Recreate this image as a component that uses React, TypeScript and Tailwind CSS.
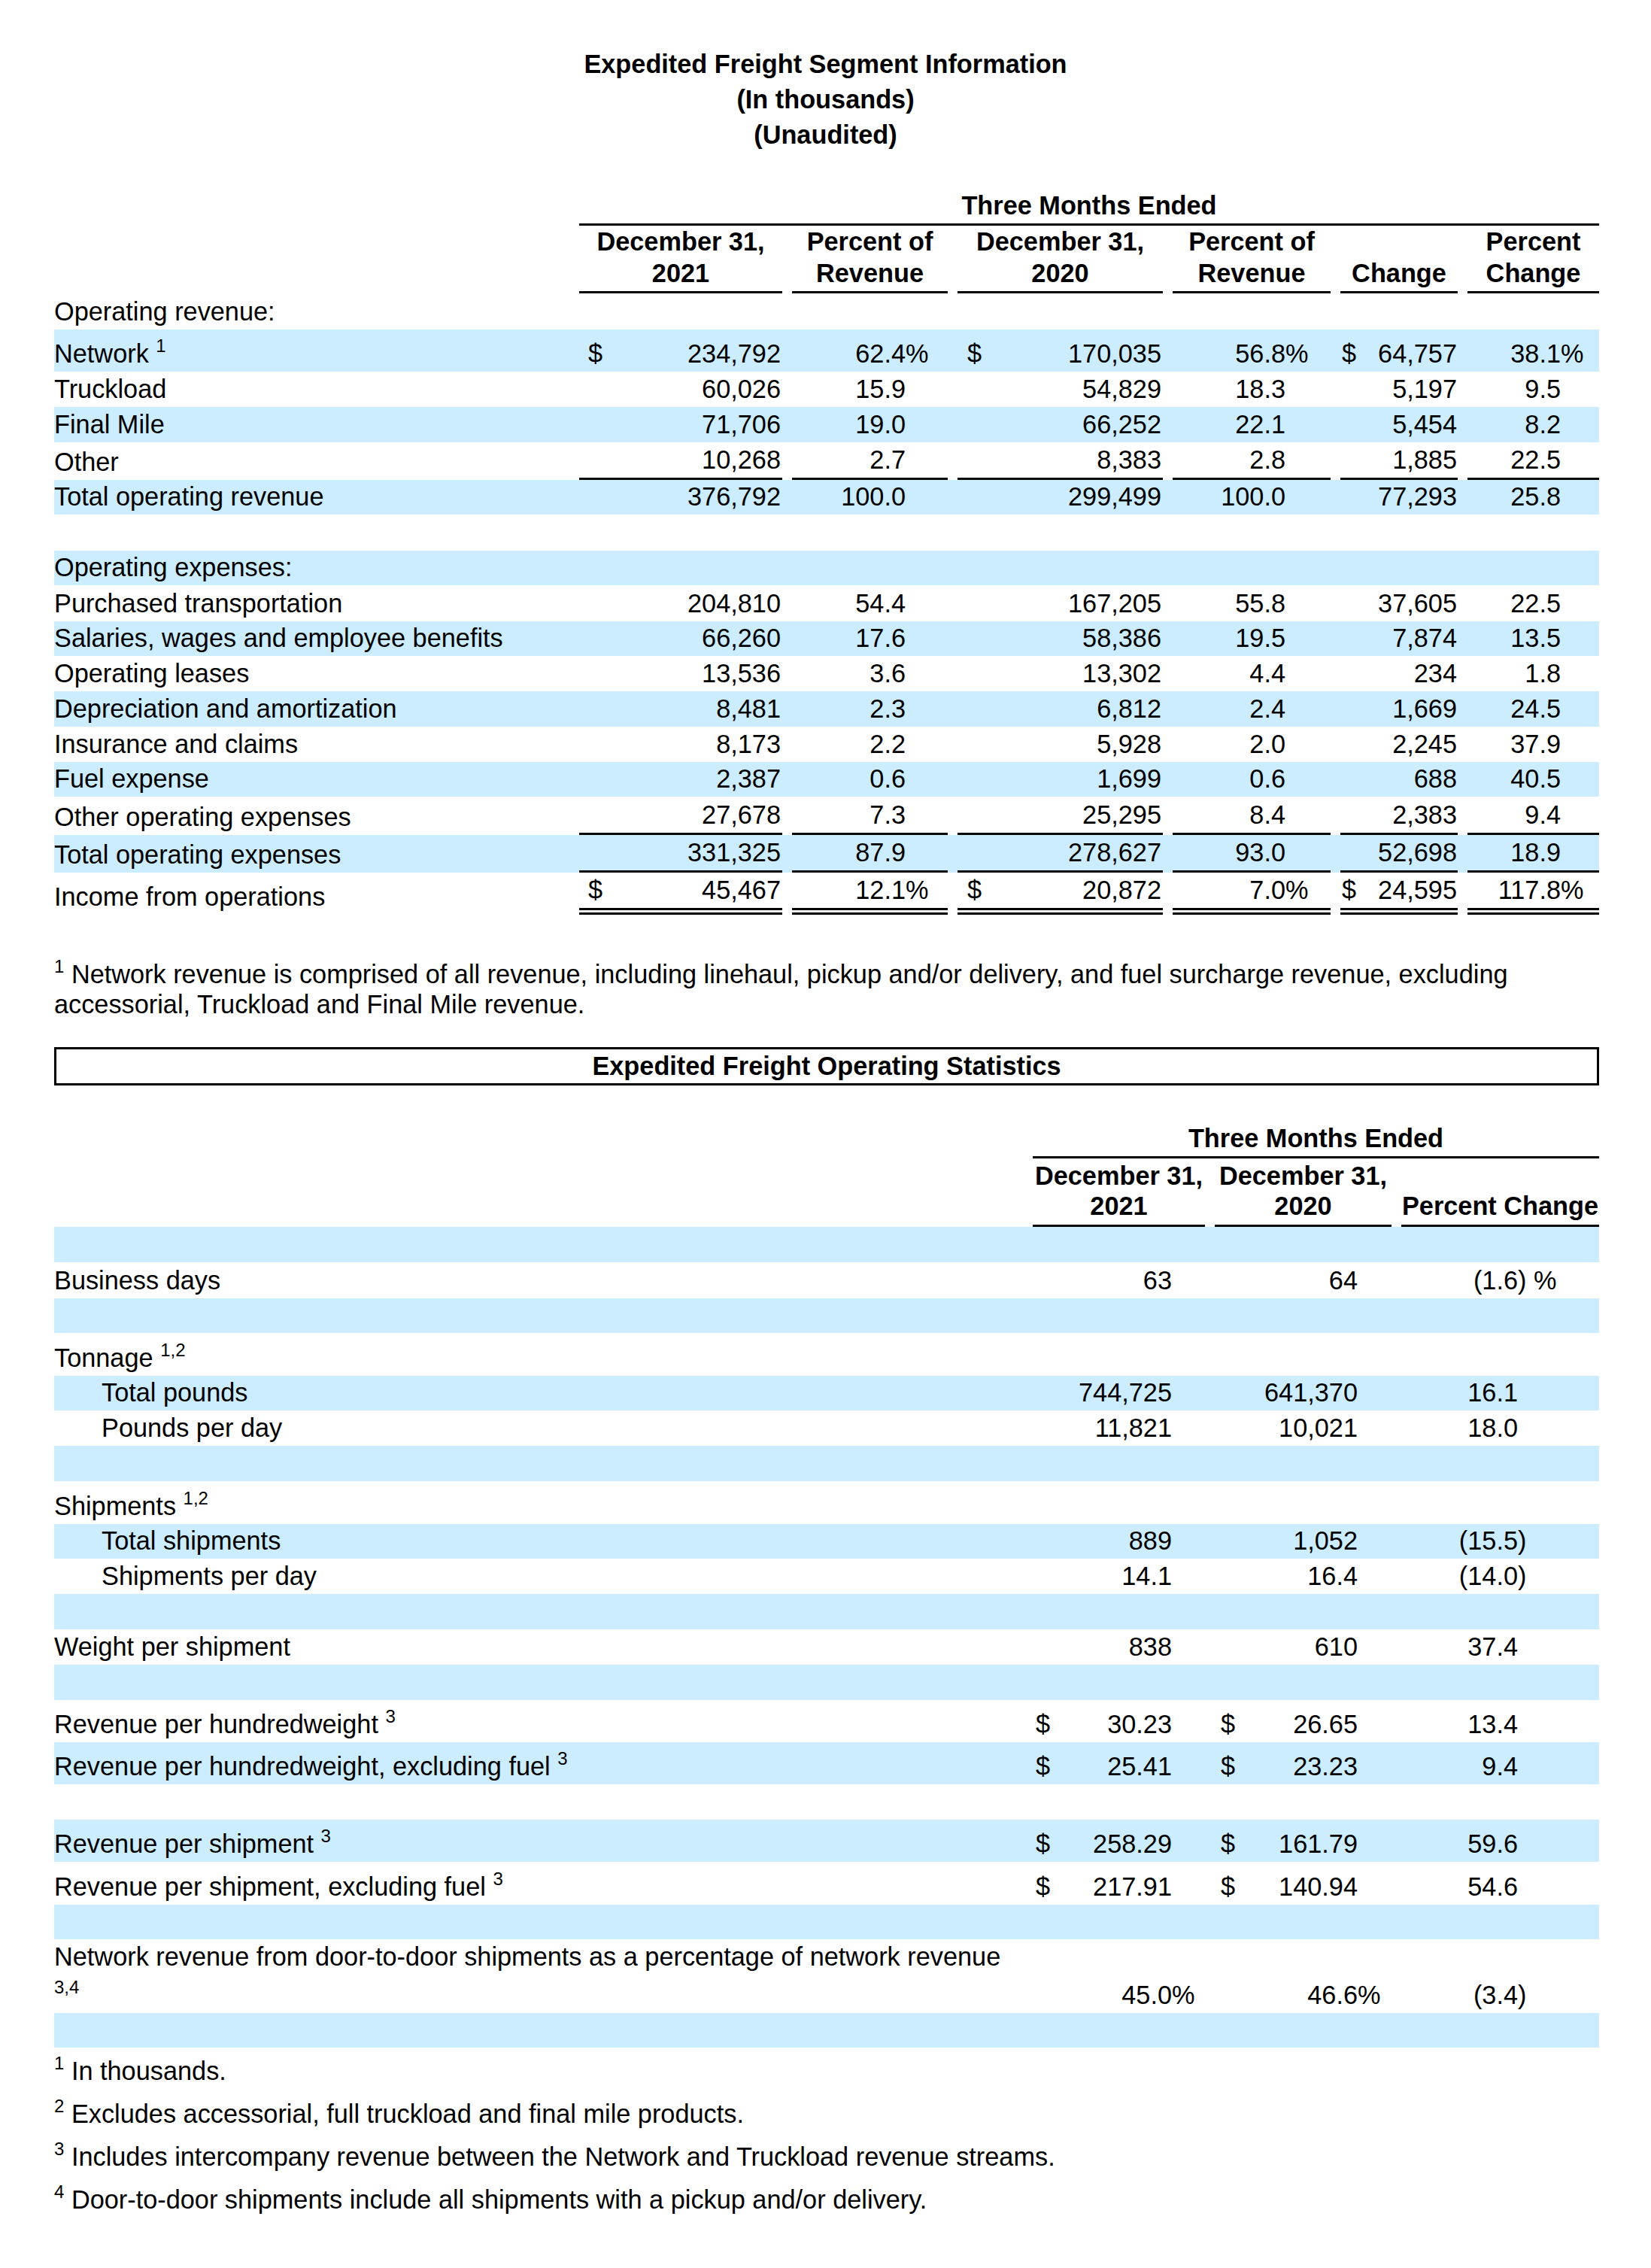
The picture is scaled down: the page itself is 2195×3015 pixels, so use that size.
import React from "react";

const BLUE = "bg-[#ccecff]";

function Sup({ children }: { children: React.ReactNode }) {
  return <span className="relative top-[-14px] text-[24px] leading-none">{children}</span>;
}

type V = { d?: boolean; v: string; s?: string };

const T1W = ["w-[270px]", "w-[207px]", "w-[273px]", "w-[210px]", "w-[156px]", "w-[175px]"];
const T1PR = ["pr-[2px]", "pr-[56px]", "pr-[2px]", "pr-[60px]", "pr-[1px]", "pr-[51px]"];
const T1PL = ["pl-[12px]", "", "pl-[13px]", "", "pl-[2px]", ""];

const T2W = ["w-[229px]", "w-[235px]", "w-[263px]"];
const T2PR = ["pr-[44px]", "pr-[45px]", "pr-[108px]"];
const T2PL = ["pl-[4px]", "pl-[8px]", ""];

function Cell({ val, w, pr, pl, border }: { val?: V; w: string; pr: string; pl: string; border: string }) {
  return (
    <div className={`flex shrink-0 leading-[47px] ${w} ${pr} ${pl} ${border}`}>
      {val?.d && <span>$</span>}
      <span className="ml-auto whitespace-nowrap">{val ? val.v : "\u00a0"}</span>
      {val?.s && <span className="w-0 shrink-0 whitespace-nowrap">{val.s}</span>}
    </div>
  );
}

type R1 = {
  label?: React.ReactNode;
  vals?: V[];
  h: string;
  blue?: boolean;
  border?: "single" | "double";
};

const rows1: R1[] = [
  { label: "Operating revenue:", h: "h-[48px]" },
  {
    label: (
      <>
        Network <Sup>1</Sup>
      </>
    ),
    h: "h-[56px]",
    blue: true,
    vals: [
      { d: true, v: "234,792" },
      { v: "62.4", s: "%" },
      { d: true, v: "170,035" },
      { v: "56.8", s: "%" },
      { d: true, v: "64,757" },
      { v: "38.1", s: "%" },
    ],
  },
  {
    label: "Truckload",
    h: "h-[47px]",
    vals: [{ v: "60,026" }, { v: "15.9" }, { v: "54,829" }, { v: "18.3" }, { v: "5,197" }, { v: "9.5" }],
  },
  {
    label: "Final Mile",
    h: "h-[47px]",
    blue: true,
    vals: [{ v: "71,706" }, { v: "19.0" }, { v: "66,252" }, { v: "22.1" }, { v: "5,454" }, { v: "8.2" }],
  },
  {
    label: "Other",
    h: "h-[50px]",
    border: "single",
    vals: [{ v: "10,268" }, { v: "2.7" }, { v: "8,383" }, { v: "2.8" }, { v: "1,885" }, { v: "22.5" }],
  },
  {
    label: "Total operating revenue",
    h: "h-[46px]",
    blue: true,
    vals: [{ v: "376,792" }, { v: "100.0" }, { v: "299,499" }, { v: "100.0" }, { v: "77,293" }, { v: "25.8" }],
  },
  { h: "h-[48px]" },
  { label: "Operating expenses:", h: "h-[46px]", blue: true },
  {
    label: "Purchased transportation",
    h: "h-[48px]",
    vals: [{ v: "204,810" }, { v: "54.4" }, { v: "167,205" }, { v: "55.8" }, { v: "37,605" }, { v: "22.5" }],
  },
  {
    label: "Salaries, wages and employee benefits",
    h: "h-[46px]",
    blue: true,
    vals: [{ v: "66,260" }, { v: "17.6" }, { v: "58,386" }, { v: "19.5" }, { v: "7,874" }, { v: "13.5" }],
  },
  {
    label: "Operating leases",
    h: "h-[47px]",
    vals: [{ v: "13,536" }, { v: "3.6" }, { v: "13,302" }, { v: "4.4" }, { v: "234" }, { v: "1.8" }],
  },
  {
    label: "Depreciation and amortization",
    h: "h-[47px]",
    blue: true,
    vals: [{ v: "8,481" }, { v: "2.3" }, { v: "6,812" }, { v: "2.4" }, { v: "1,669" }, { v: "24.5" }],
  },
  {
    label: "Insurance and claims",
    h: "h-[47px]",
    vals: [{ v: "8,173" }, { v: "2.2" }, { v: "5,928" }, { v: "2.0" }, { v: "2,245" }, { v: "37.9" }],
  },
  {
    label: "Fuel expense",
    h: "h-[46px]",
    blue: true,
    vals: [{ v: "2,387" }, { v: "0.6" }, { v: "1,699" }, { v: "0.6" }, { v: "688" }, { v: "40.5" }],
  },
  {
    label: "Other operating expenses",
    h: "h-[51px]",
    border: "single",
    vals: [{ v: "27,678" }, { v: "7.3" }, { v: "25,295" }, { v: "8.4" }, { v: "2,383" }, { v: "9.4" }],
  },
  {
    label: "Total operating expenses",
    h: "h-[50px]",
    blue: true,
    border: "single",
    vals: [{ v: "331,325" }, { v: "87.9" }, { v: "278,627" }, { v: "93.0" }, { v: "52,698" }, { v: "18.9" }],
  },
  {
    label: "Income from operations",
    h: "h-[56px]",
    border: "double",
    vals: [
      { d: true, v: "45,467" },
      { v: "12.1", s: "%" },
      { d: true, v: "20,872" },
      { v: "7.0", s: "%" },
      { d: true, v: "24,595" },
      { v: "117.8", s: "%" },
    ],
  },
];

type R2 = {
  label?: React.ReactNode;
  vals?: V[];
  h: string;
  blue?: boolean;
  indent?: boolean;
  tall?: boolean;
};

const rows2: R2[] = [
  { h: "h-[47px]", blue: true },
  { label: "Business days", h: "h-[48px]", vals: [{ v: "63" }, { v: "64" }, { v: "(1.6", s: ") %" }] },
  { h: "h-[46px]", blue: true },
  {
    label: (
      <>
        Tonnage <Sup>1,2</Sup>
      </>
    ),
    h: "h-[57px]",
  },
  { label: "Total pounds", indent: true, h: "h-[46px]", blue: true, vals: [{ v: "744,725" }, { v: "641,370" }, { v: "16.1" }] },
  { label: "Pounds per day", indent: true, h: "h-[47px]", vals: [{ v: "11,821" }, { v: "10,021" }, { v: "18.0" }] },
  { h: "h-[47px]", blue: true },
  {
    label: (
      <>
        Shipments <Sup>1,2</Sup>
      </>
    ),
    h: "h-[57px]",
  },
  { label: "Total shipments", indent: true, h: "h-[46px]", blue: true, vals: [{ v: "889" }, { v: "1,052" }, { v: "(15.5", s: ")" }] },
  { label: "Shipments per day", indent: true, h: "h-[47px]", vals: [{ v: "14.1" }, { v: "16.4" }, { v: "(14.0", s: ")" }] },
  { h: "h-[47px]", blue: true },
  { label: "Weight per shipment", h: "h-[47px]", vals: [{ v: "838" }, { v: "610" }, { v: "37.4" }] },
  { h: "h-[47px]", blue: true },
  {
    label: (
      <>
        Revenue per hundredweight <Sup>3</Sup>
      </>
    ),
    h: "h-[56px]",
    vals: [{ d: true, v: "30.23" }, { d: true, v: "26.65" }, { v: "13.4" }],
  },
  {
    label: (
      <>
        Revenue per hundredweight, excluding fuel <Sup>3</Sup>
      </>
    ),
    h: "h-[56px]",
    blue: true,
    vals: [{ d: true, v: "25.41" }, { d: true, v: "23.23" }, { v: "9.4" }],
  },
  { h: "h-[47px]" },
  {
    label: (
      <>
        Revenue per shipment <Sup>3</Sup>
      </>
    ),
    h: "h-[56px]",
    blue: true,
    vals: [{ d: true, v: "258.29" }, { d: true, v: "161.79" }, { v: "59.6" }],
  },
  {
    label: (
      <>
        Revenue per shipment, excluding fuel <Sup>3</Sup>
      </>
    ),
    h: "h-[57px]",
    vals: [{ d: true, v: "217.91" }, { d: true, v: "140.94" }, { v: "54.6" }],
  },
  { h: "h-[46px]", blue: true },
  {
    label: "Network revenue from door-to-door shipments as a percentage of network revenue",
    tall: true,
    h: "h-[98px]",
    vals: [{ v: "45.0", s: "%" }, { v: "46.6", s: "%" }, { v: "(3.4", s: ")" }],
  },
  { h: "h-[46px]", blue: true },
];

function Table1() {
  return (
    <div className="ml-[72px] mt-[47px] w-[2054px]">
      <div className="flex gap-x-[13px]">
        <div className="w-[685px] shrink-0" />
        <div className="w-[1356px] shrink-0 border-b-[3px] border-black text-center font-bold leading-[47px]">
          Three Months Ended
        </div>
      </div>
      <div className="flex gap-x-[13px]">
        <div className="w-[685px] shrink-0" />
        {[
          ["December 31,", "2021"],
          ["Percent of", "Revenue"],
          ["December 31,", "2020"],
          ["Percent of", "Revenue"],
          ["", "Change"],
          ["Percent", "Change"],
        ].map((h, i) => (
          <div
            key={i}
            className={`flex h-[90px] shrink-0 flex-col justify-end whitespace-nowrap border-b-[3px] border-black pb-[3px] text-center font-bold leading-[42px] ${T1W[i]}`}
          >
            {h[0] && <div>{h[0]}</div>}
            <div>{h[1]}</div>
          </div>
        ))}
      </div>
      {rows1.map((r, ri) => {
        const border =
          r.border === "single"
            ? "border-b-[3px] border-black"
            : r.border === "double"
              ? "border-b-[9px] border-double border-black"
              : "";
        return (
          <div key={ri} className={`flex items-end gap-x-[13px] ${r.h} ${r.blue ? BLUE : ""}`}>
            <div className="w-[685px] shrink-0 whitespace-nowrap leading-[47px]">{r.label ?? "\u00a0"}</div>
            {r.vals &&
              r.vals.map((v, i) => (
                <Cell key={i} val={v} w={T1W[i]} pr={T1PR[i]} pl={T1PL[i]} border={border} />
              ))}
          </div>
        );
      })}
    </div>
  );
}

function Table2() {
  return (
    <div className="ml-[72px] mt-[47px] w-[2054px]">
      <div className="flex gap-x-[13px]">
        <div className="w-[1288px] shrink-0" />
        <div className="w-[753px] shrink-0 border-b-[3px] border-black text-center font-bold leading-[47px]">
          Three Months Ended
        </div>
      </div>
      <div className="flex gap-x-[13px]">
        <div className="w-[1288px] shrink-0" />
        {[
          ["December 31,", "2021"],
          ["December 31,", "2020"],
          ["", "Percent Change"],
        ].map((h, i) => (
          <div
            key={i}
            className={`flex h-[91px] shrink-0 flex-col justify-end whitespace-nowrap border-b-[3px] border-black pb-[5px] text-center font-bold leading-[40px] ${T2W[i]}`}
          >
            {h[0] && <div>{h[0]}</div>}
            <div>{h[1]}</div>
          </div>
        ))}
      </div>
      {rows2.map((r, ri) => (
        <div key={ri} className={`flex items-end gap-x-[13px] ${r.h} ${r.blue ? BLUE : ""}`}>
          {r.tall ? (
            <div className="w-[1288px] shrink-0 self-start whitespace-nowrap">
              <div className="leading-[47px]">{r.label}</div>
              <div className="mt-[6px] text-[24px] leading-[22px]">3,4</div>
            </div>
          ) : (
            <div className={`w-[1288px] shrink-0 whitespace-nowrap leading-[47px] ${r.indent ? "pl-[63px]" : ""}`}>
              {r.label ?? "\u00a0"}
            </div>
          )}
          {r.vals &&
            r.vals.map((v, i) => <Cell key={i} val={v} w={T2W[i]} pr={T2PR[i]} pl={T2PL[i]} border="" />)}
        </div>
      ))}
    </div>
  );
}

export default function App() {
  return (
    <div className="min-h-[3015px] w-[2195px] bg-white font-['Liberation_Sans',Arial,sans-serif] text-[34.3px] text-black">
      <div className="pt-[62px] text-center font-bold leading-[47px]">
        <div>Expedited Freight Segment Information</div>
        <div>(In thousands)</div>
        <div>(Unaudited)</div>
      </div>

      <Table1 />

      <div className="ml-[72px] mt-[59px] w-[2054px] whitespace-nowrap leading-[40px]">
        <div>
          <Sup>1</Sup> Network revenue is comprised of all revenue, including linehaul, pickup and/or delivery, and fuel
          surcharge revenue, excluding
        </div>
        <div>accessorial, Truckload and Final Mile revenue.</div>
      </div>

      <div className="ml-[72px] mt-[37px] h-[51px] w-[2054px] border-[3px] border-black text-center font-bold leading-[45px]">
        Expedited Freight Operating Statistics
      </div>

      <Table2 />

      <div className="ml-[72px] mt-[3px] w-[2054px] whitespace-nowrap leading-[57px]">
        <div>
          <Sup>1</Sup> In thousands.
        </div>
        <div>
          <Sup>2</Sup> Excludes accessorial, full truckload and final mile products.
        </div>
        <div>
          <Sup>3</Sup> Includes intercompany revenue between the Network and Truckload revenue streams.
        </div>
        <div>
          <Sup>4</Sup> Door-to-door shipments include all shipments with a pickup and/or delivery.
        </div>
      </div>
    </div>
  );
}
